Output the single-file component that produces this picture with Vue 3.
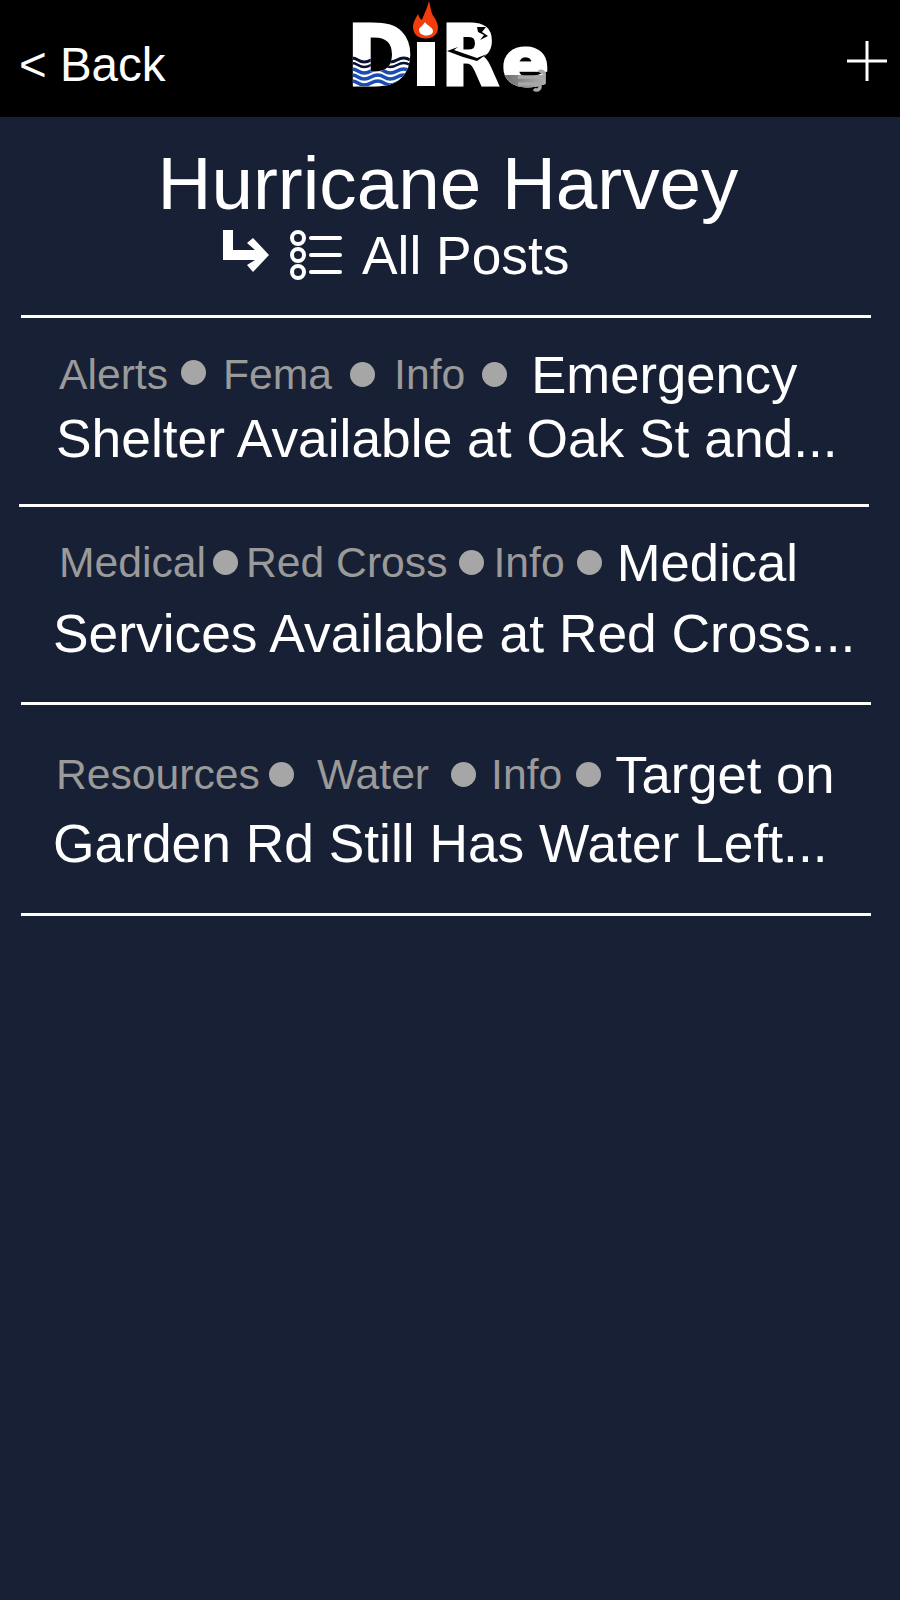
<script setup>
const posts = [
  {
    left: 59, lineLeft: 56, rule: 19, top: 26, gap: 3, bottom: 33,
    tags: [
      { label: 'Alerts', before: 13, after: 17, lift: 4 },
      { label: 'Fema', before: 18, after: 19, lift: 0 },
      { label: 'Info', before: 17, after: 24, lift: 0 },
    ],
    lead: 'Emergency',
    rest: 'Shelter Available at Oak St and...',
  },
  {
    left: 59, lineLeft: 53, rule: 21, top: 25, gap: 10, bottom: 36,
    tags: [
      { label: 'Medical', before: 7, after: 8, lift: 0 },
      { label: 'Red Cross', before: 11, after: 10, lift: 0 },
      { label: 'Info', before: 12, after: 15, lift: 0 },
    ],
    lead: 'Medical',
    rest: 'Services Available at Red Cross...',
  },
  {
    left: 56, lineLeft: 53, rule: 21, top: 39, gap: 8, bottom: 37,
    tags: [
      { label: 'Resources', before: 9, after: 23, lift: 0 },
      { label: 'Water', before: 22, after: 15, lift: 0 },
      { label: 'Info', before: 14, after: 14, lift: 0 },
    ],
    lead: 'Target on',
    rest: 'Garden Rd Still Has Water Left...',
  },
]
</script>

<template>
  <div class="app">
    <header class="topbar">
      <span class="back">&lt; Back</span>
      <svg class="logo" width="240" height="110" viewBox="330 0 240 110">
        <defs>
          <mask id="letter-d" maskUnits="userSpaceOnUse" x="330" y="0" width="240" height="110">
            <text x="347" y="85" class="logo-text" fill="#fff" stroke="#fff" stroke-width="3" font-size="84" textLength="66" lengthAdjust="spacingAndGlyphs">D</text>
          </mask>
          <mask id="letter-e" maskUnits="userSpaceOnUse" x="330" y="0" width="240" height="110">
            <text x="502" y="85" class="logo-text" fill="#fff" stroke="#fff" stroke-width="3" font-size="65" textLength="47" lengthAdjust="spacingAndGlyphs">e</text>
          </mask>
          <linearGradient id="wind">
            <stop offset="0" stop-color="#6a6a6a" />
            <stop offset="1" stop-color="#b5b5b5" />
          </linearGradient>
        </defs>
        <text x="347" y="85" class="logo-text" fill="#fff" stroke="#fff" stroke-width="3" font-size="84" textLength="66" lengthAdjust="spacingAndGlyphs">D</text>
        <g mask="url(#letter-d)">
          <path d="M345 60q7-4 13 0t13 0t13 0t13 0t13 0" fill="none" stroke="#0a1030" stroke-width="3" />
          <path d="M345 65q7-4 13 0t13 0t13 0t13 0t13 0" fill="none" stroke="#0a1030" stroke-width="2.500" />
          <path d="M345 71q7-4 13 0t13 0t13 0t13 0t13 0" fill="none" stroke="#1b4cb0" stroke-width="3.500" />
          <path d="M345 77q7-4 13 0t13 0t13 0t13 0t13 0" fill="none" stroke="#1b4cb0" stroke-width="3.500" />
          <path d="M345 83q7-4 13 0t13 0t13 0t13 0t13 0" fill="none" stroke="#1b4cb0" stroke-width="3.500" />
        </g>
        <rect x="417" y="42" width="18" height="44" fill="#fff" />
        <path d="M429 1C431 9 431 13 434 17C437 21 438 25 438 28C438 34 433 38.500 426 38.500C418 38.500 413 34 413 27C413 22 416 18 418 14C419 17 420 19 422 20C424 14 427 9 429 1z" fill="#f23c0c" />
        <path d="M425 22C427 26 433 27 433 31C433 34 430 35.500 426 35.500C422 35.500 419 33 419 30C419 27 423 26 425 22z" fill="#fff" />
        <text x="441" y="85" class="logo-text" fill="#fff" stroke="#fff" stroke-width="3" font-size="84" textLength="58" lengthAdjust="spacingAndGlyphs">R</text>
        <path d="M447 51l11-4l-4 3l23 8l10-4l-10 7l-14-4l-16-6z" fill="#000" />
        <path d="M477 27h9l-4 5l6 4l-8 4l4-5l-6-3z" fill="#000" />
        <text x="502" y="85" class="logo-text" fill="#fff" stroke="#fff" stroke-width="3" font-size="65" textLength="47" lengthAdjust="spacingAndGlyphs">e</text>
        <g mask="url(#letter-e)">
          <rect x="500" y="75" width="50" height="14" fill="url(#wind)" />
        </g>
        <path d="M518 77h25a3 3 0 1 0-4-5M518 84h21a3.500 3.500 0 1 1-5 5" fill="none" stroke="#a8a8a8" stroke-width="3.500" />
      </svg>
      <svg class="plus" width="40" height="40" viewBox="0 0 40 40">
        <path d="M0 20h40M20 0v40" stroke="#fff" stroke-width="3" />
      </svg>
    </header>

    <h1 class="title">Hurricane Harvey</h1>

    <div class="crumb">
      <svg width="48" height="58" viewBox="222 226 48 58">
        <path d="M223 230h10v20h22l-8-7l6-5l16 17l-16 17l-6-7l8-5h-32z" fill="#fff" />
      </svg>
      <svg class="list-icon" width="54" height="58" viewBox="288 226 54 58">
        <g fill="none" stroke="#fff" stroke-width="4">
          <circle cx="297" cy="238" r="6" />
          <circle cx="297" cy="255" r="6" />
          <circle cx="297" cy="272" r="6" />
        </g>
        <path d="M310 238h29M310 255h29M310 272h29" stroke="#fff" stroke-width="4" stroke-linecap="round" />
      </svg>
      <span class="crumb-text">All Posts</span>
    </div>

    <div class="rule first"></div>

    <section v-for="post in posts" :key="post.rest" class="post">
      <div class="tags" :style="{ marginLeft: post.left + 'px', marginTop: post.top + 'px' }">
        <template v-for="tag in post.tags" :key="tag.label">
          <span class="tag">{{ tag.label }}</span>
          <span
            class="dot"
            :style="{ marginLeft: tag.before + 'px', marginRight: tag.after + 'px', marginBottom: tag.lift + 'px' }"
          ></span>
        </template>
        <span class="lead">{{ post.lead }}</span>
      </div>
      <div
        class="rest"
        :style="{ marginLeft: post.lineLeft + 'px', marginTop: post.gap + 'px', marginBottom: post.bottom + 'px' }"
      >{{ post.rest }}</div>
      <div class="rule" :style="{ marginLeft: post.rule + 'px' }"></div>
    </section>
  </div>
</template>

<style scoped>
.app {
  width: 900px;
  height: 1600px;
  background: #182035;
  color: #fff;
  font-family: "Liberation Sans", Arial, sans-serif;
  overflow: hidden;
}

.topbar {
  height: 117px;
  background: #000;
  display: flex;
  align-items: center;
  justify-content: space-between;
  padding: 0 13px 0 19px;
  position: relative;
}

.back {
  font-size: 47.5px;
  margin-top: 12px;
}

.logo {
  position: absolute;
  left: 330px;
  top: 0;
}

.logo-text {
  font-family: "DejaVu Sans", sans-serif;
  font-weight: 700;
}

.plus {
  margin-top: 5px;
}

.title {
  margin: 26px 0 0;
  padding-right: 4px;
  font-size: 74.67px;
  font-weight: 400;
  line-height: 80px;
  text-align: center;
}

.crumb {
  display: flex;
  align-items: center;
  margin: 3px 0 0 222px;
  height: 58px;
}

.list-icon {
  margin-left: 19px;
}

.crumb-text {
  font-size: 53.33px;
  margin-left: 19px;
}

.rule {
  width: 850px;
  height: 3px;
  background: #fff;
}

.rule.first {
  margin: 31px 0 0 21px;
}

.tags {
  display: flex;
  align-items: center;
  height: 60px;
  white-space: nowrap;
}

.tag {
  font-size: 42.67px;
  color: #9a9a9a;
}

.dot {
  width: 25px;
  height: 25px;
  border-radius: 50%;
  background: #a6a6a6;
  flex: none;
}

.lead {
  font-size: 52.6px;
}

.rest {
  font-size: 53.33px;
  line-height: 64px;
  white-space: nowrap;
}
</style>
